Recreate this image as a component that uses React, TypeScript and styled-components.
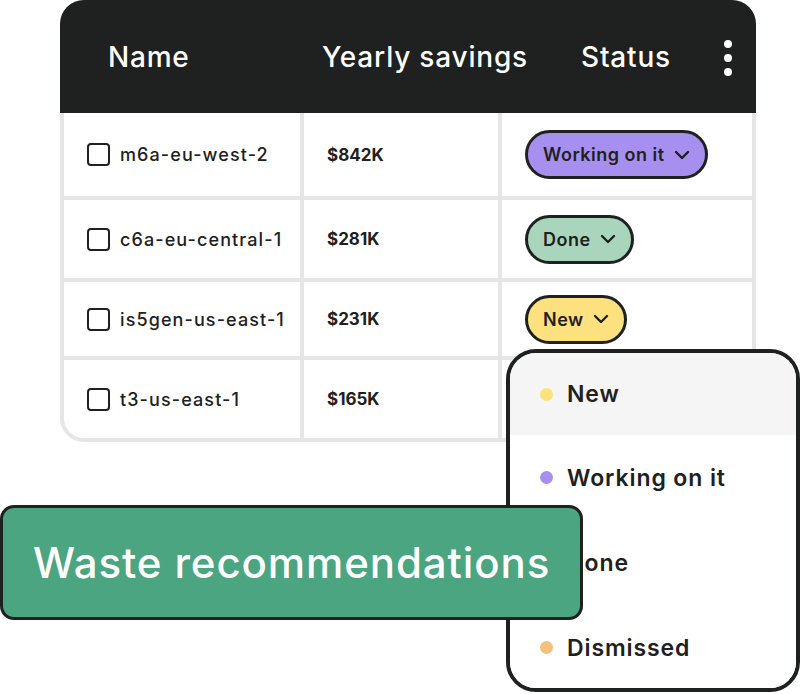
import styled, { createGlobalStyle } from "styled-components";

const GlobalStyle = createGlobalStyle`
  body {
    margin: 0;
    background: #ffffff;
    font-family: Inter, "Noto Sans", sans-serif;
    color: #1e2120;
  }
`;

const Stage = styled.div`
  position: relative;
  width: 800px;
  height: 694px;
  overflow: hidden;
`;

const Card = styled.div`
  margin-left: 60px;
  width: 696px;
  border-radius: 24px 24px 0 24px;
  overflow: hidden;
  background: #e6e6e6;
`;

const Header = styled.div`
  height: 113px;
  background: #1e2120;
  display: flex;
  align-items: center;
  padding-left: 48px;
  color: #ffffff;
  font-size: 28px;
  font-weight: 500;
  letter-spacing: 0.8px;
`;

const HeadCell = styled.div<{ $w: number }>`
  width: ${(p) => p.$w}px;
  flex-shrink: 0;
`;

const Kebab = styled.div`
  display: flex;
  flex-direction: column;
  gap: 6px;
  padding-top: 2px;

  span {
    width: 8px;
    height: 8px;
    border-radius: 50%;
    background: #ffffff;
  }
`;

const Body = styled.div`
  display: flex;
  flex-direction: column;
  gap: 4px;
  padding: 0 4px 4px;
`;

const Row = styled.div<{ $h: number }>`
  display: grid;
  grid-template-columns: 236px 194px 250px;
  gap: 4px;
  height: ${(p) => p.$h}px;
`;

const Cell = styled.div`
  background: #ffffff;
  display: flex;
  align-items: center;
  padding-left: 23px;
  font-size: 18px;
  font-weight: 500;
  letter-spacing: 1.1px;
`;

const LastRowFix = styled(Body)`
  ${Row}:last-child > ${Cell}:first-child {
    border-bottom-left-radius: 20px;
  }
`;

const Checkbox = styled.span`
  width: 23px;
  height: 23px;
  box-sizing: border-box;
  border: 2.5px solid #1e2120;
  border-radius: 4px;
  margin-right: 10px;
  flex-shrink: 0;
`;

const Amount = styled.span`
  font-size: 17px;
  font-weight: 700;
  letter-spacing: 0;
`;

const Pill = styled.div<{ $bg: string }>`
  display: inline-flex;
  align-items: center;
  gap: 9px;
  height: 49px;
  box-sizing: border-box;
  padding: 0 15px;
  border: 3px solid #1e2120;
  border-radius: 25px;
  background: ${(p) => p.$bg};
  font-size: 18px;
  font-weight: 600;
  letter-spacing: 0.5px;
`;

const Dropdown = styled.div`
  position: absolute;
  left: 506px;
  top: 349px;
  width: 294px;
  height: 343px;
  box-sizing: border-box;
  border: 4px solid #1e2120;
  border-radius: 30px;
  background: #ffffff;
  overflow: hidden;
  z-index: 1;
`;

const Option = styled.div<{ $active?: boolean }>`
  height: ${(p) => (p.$active ? 82 : 85)}px;
  display: flex;
  align-items: center;
  gap: 14px;
  padding-left: 30px;
  background: ${(p) => (p.$active ? "#f5f5f5" : "#ffffff")};
  font-size: 23px;
  font-weight: 600;
  letter-spacing: 0.9px;
`;

const Dot = styled.span<{ $c: string }>`
  width: 13px;
  height: 13px;
  border-radius: 50%;
  background: ${(p) => p.$c};
`;

const Banner = styled.div`
  position: absolute;
  left: 0;
  top: 505px;
  width: 583px;
  height: 115px;
  box-sizing: border-box;
  border: 3px solid #1e2120;
  border-radius: 14px;
  background: #4aa580;
  color: #ffffff;
  display: flex;
  align-items: center;
  padding-left: 30px;
  font-size: 42px;
  font-weight: 500;
  letter-spacing: 0.9px;
  z-index: 2;
`;

const Chevron = () => (
  <svg width="16" height="10" viewBox="0 0 16 10" fill="none">
    <path d="M2 2l6 6 6-6" stroke="#1e2120" strokeWidth="2.4" strokeLinecap="round" strokeLinejoin="round" />
  </svg>
);

const rows = [
  { name: "m6a-eu-west-2", amount: "$842K", status: "Working on it", bg: "#a78ff0", h: 83 },
  { name: "c6a-eu-central-1", amount: "$281K", status: "Done", bg: "#a9d5bd", h: 78 },
  { name: "is5gen-us-east-1", amount: "$231K", status: "New", bg: "#fde17f", h: 74 },
  { name: "t3-us-east-1", amount: "$165K", status: "", bg: "", h: 78 },
];

const options = [
  { label: "New", color: "#fde17f" },
  { label: "Working on it", color: "#a78ff0" },
  { label: "Done", color: "#a9d5bd" },
  { label: "Dismissed", color: "#f7c07a" },
];

export default function App() {
  return (
    <Stage>
      <GlobalStyle />
      <Card>
        <Header>
          <HeadCell $w={214}>Name</HeadCell>
          <HeadCell $w={259}>Yearly savings</HeadCell>
          <HeadCell $w={143}>Status</HeadCell>
          <Kebab>
            <span />
            <span />
            <span />
          </Kebab>
        </Header>
        <LastRowFix>
          {rows.map((r) => (
            <Row key={r.name} $h={r.h}>
              <Cell>
                <Checkbox />
                {r.name}
              </Cell>
              <Cell>
                <Amount>{r.amount}</Amount>
              </Cell>
              <Cell>
                {r.status && (
                  <Pill $bg={r.bg}>
                    {r.status}
                    <Chevron />
                  </Pill>
                )}
              </Cell>
            </Row>
          ))}
        </LastRowFix>
      </Card>
      <Dropdown>
        {options.map((o, i) => (
          <Option key={o.label} $active={i === 0}>
            <Dot $c={o.color} />
            {o.label}
          </Option>
        ))}
      </Dropdown>
      <Banner>Waste recommendations</Banner>
    </Stage>
  );
}
